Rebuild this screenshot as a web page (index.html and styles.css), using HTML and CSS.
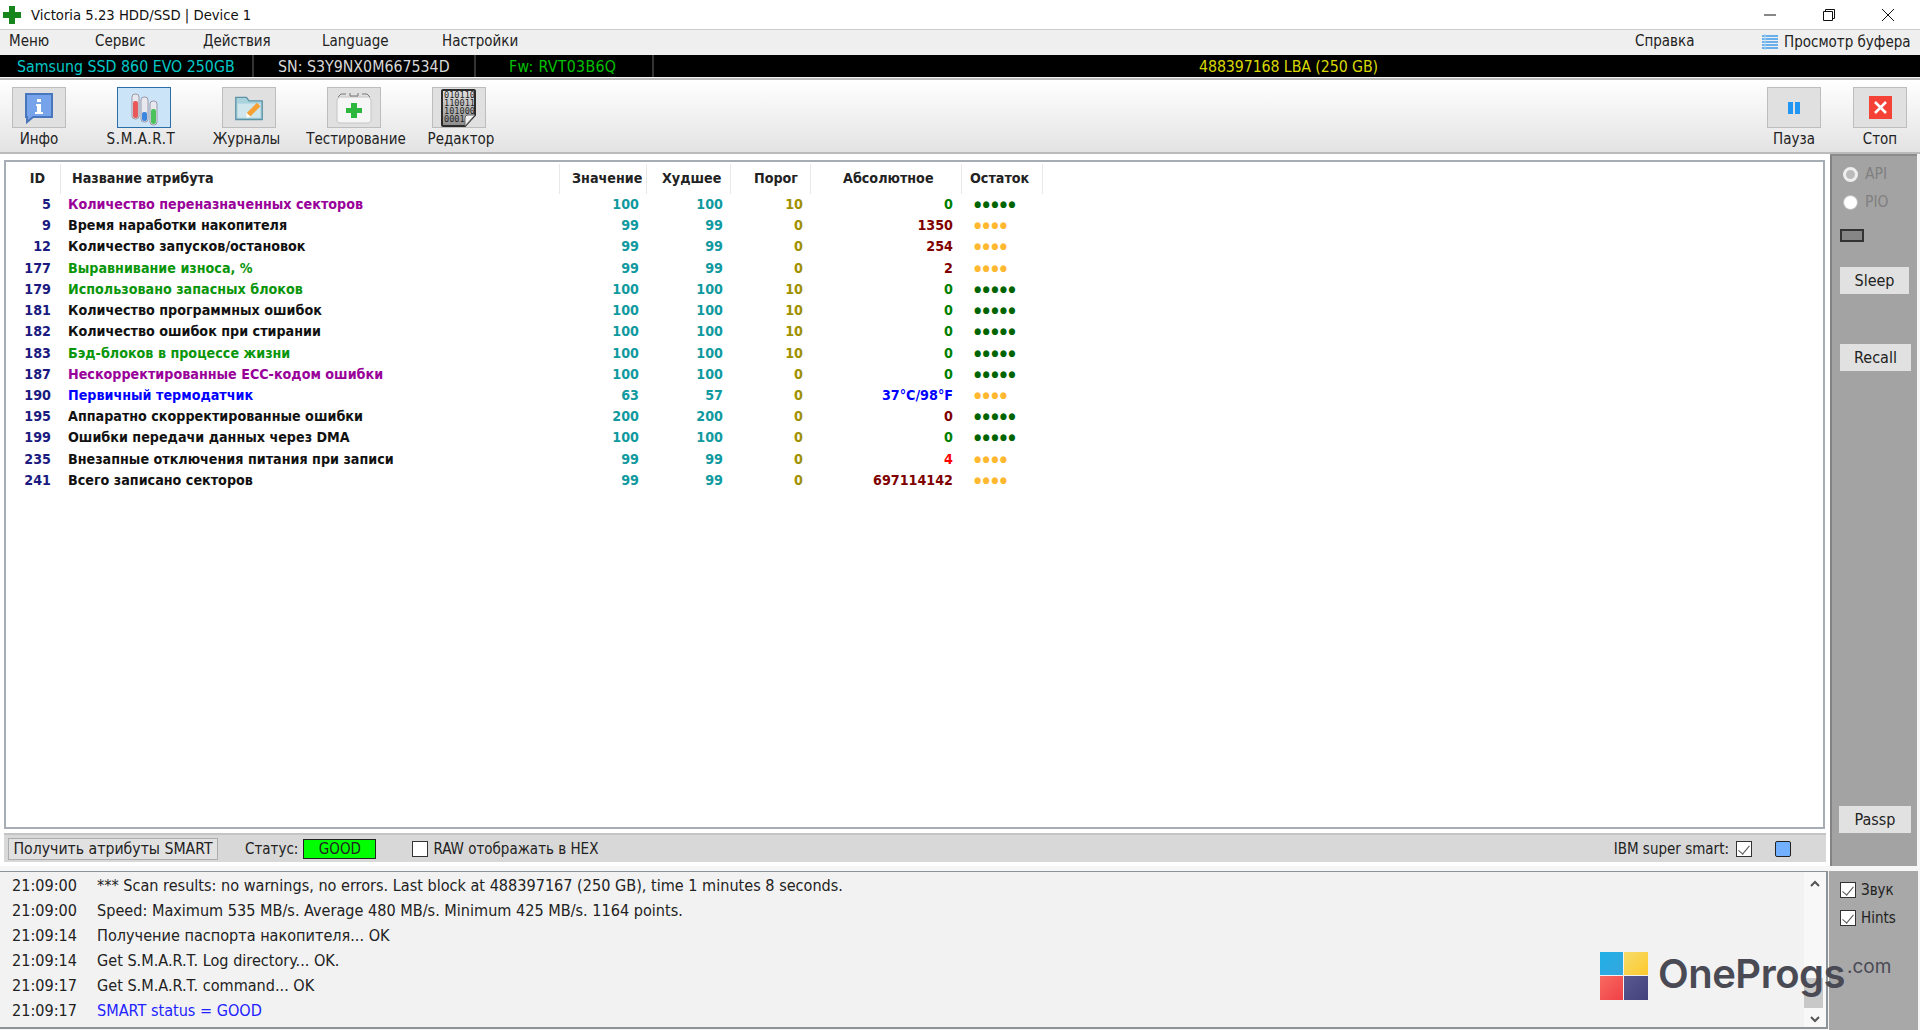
FILE: index.html
```html
<!DOCTYPE html>
<html lang="ru">
<head>
  <meta charset="UTF-8">
  <title>Victoria 5.23 HDD/SSD | Device 1</title>
  <link rel="stylesheet" href="styles.css">
</head>
<body>
  <header class="titlebar">
    <svg class="app-icon" width="20" height="20" viewBox="0 0 20 20"><path fill="#16861c" d="M7 1h6v6h6v6h-6v6H7v-6H1V7h6z"/></svg>
    <span class="title">Victoria 5.23 HDD/SSD | Device 1</span>
    <div class="win-buttons">
      <svg width="14" height="14" viewBox="0 0 14 14"><path d="M1 7h12" stroke="#111" fill="none"/></svg>
      <svg width="14" height="14" viewBox="0 0 14 14"><path d="M1.5 3.5h9v9h-9zM3.5 3.5v-2h9v9h-2" stroke="#111" fill="none"/></svg>
      <svg width="14" height="14" viewBox="0 0 14 14"><path d="M1 1l12 12M13 1L1 13" stroke="#111" fill="none"/></svg>
    </div>
  </header>

  <nav class="menubar">
    <span class="menu-item m1">Меню</span>
    <span class="menu-item m2">Сервис</span>
    <span class="menu-item m3">Действия</span>
    <span class="menu-item m4">Language</span>
    <span class="menu-item m5">Настройки</span>
    <span class="menu-item m6">Справка</span>
    <span class="menu-item m7">
      <svg width="16" height="16" viewBox="0 0 16 16"><path stroke="#3c9bea" stroke-width="1.4" d="M0 2h16M0 5h16M0 8h16M0 11h16M0 14h16"/><path stroke="#a8d4f5" stroke-width="1.2" d="M3 0v16"/></svg>
      Просмотр буфера
    </span>
  </nav>

  <div class="drivebar">
    <span class="drive-cell model">Samsung SSD 860 EVO 250GB</span>
    <span class="drive-cell serial">SN: S3Y9NX0M667534D</span>
    <span class="drive-cell firmware">Fw: RVT03B6Q</span>
    <span class="drive-cell lba">488397168 LBA (250 GB)</span>
  </div>

  <div class="toolbar">
    <div class="tool">
      <div class="tool-btn">
        <svg width="34" height="34" viewBox="0 0 34 34"><path fill="#76a3ea" stroke="#4a76bd" stroke-width="2" d="M4 3h26v23H11l-6 5v-5H4z"/><rect x="15" y="8" width="4" height="3" fill="#fff"/><path fill="#fff" d="M14 13h5v8h2v2h-8v-2h2v-6h-1z"/></svg>
      </div>
      <span class="tool-label">Инфо</span>
    </div>
    <div class="tool">
      <div class="tool-btn active">
        <svg width="34" height="36" viewBox="0 0 34 36">
          <rect x="5" y="4" width="7" height="25" rx="3" fill="#e8e8ee" stroke="#9a9aa8"/><rect x="6" y="11" width="5" height="17" rx="2" fill="#e8575a"/>
          <rect x="14" y="7" width="7" height="25" rx="3" fill="#e8e8ee" stroke="#9a9aa8"/><rect x="15" y="22" width="5" height="9" rx="2" fill="#3a86e0"/>
          <rect x="23" y="11" width="7" height="24" rx="3" fill="#e8e8ee" stroke="#9a9aa8"/><rect x="24" y="19" width="5" height="15" rx="2" fill="#4cc35a"/>
        </svg>
      </div>
      <span class="tool-label label-smart">S.M.A.R.T</span>
    </div>
    <div class="tool">
      <div class="tool-btn">
        <svg width="32" height="30" viewBox="0 0 36 34"><path fill="#a8d2dc" stroke="#5b93a6" stroke-width="1.5" d="M3 5h12l3 4h15v21H3z"/><path fill="#cfe6ec" d="M5 12h26v16H5z"/><path fill="#f5a033" d="M27 11l4 4-11 11-5 1 1-5z"/><path fill="#fff" d="M15 22l5 5-5 1z"/></svg>
      </div>
      <span class="tool-label label-logs">Журналы</span>
    </div>
    <div class="tool">
      <div class="tool-btn">
        <svg width="42" height="36" viewBox="0 0 42 36"><path fill="#f6f6f6" stroke="#c4c4c4" d="M6 7h30l2 3v21l-2 2H6l-2-2V10z"/><path fill="none" stroke="#777" d="M5 7l3-3h5M17 3v3h8V3M29 4h5l3 3"/><path fill="#2db83d" d="M18 13h6v5h5v5h-5v5h-6v-5h-5v-5h5z"/></svg>
      </div>
      <span class="tool-label label-shift">Тестирование</span>
    </div>
    <div class="tool">
      <div class="tool-btn">
        <svg width="40" height="40" viewBox="0 0 40 40">
          <defs><linearGradient id="sheet" x1="0" y1="0" x2="0" y2="1"><stop offset="0" stop-color="#e4e4e4"/><stop offset="1" stop-color="#8c8c8c"/></linearGradient></defs>
          <path fill="url(#sheet)" stroke="#2c2c2c" stroke-width="2" d="M3 3q0-1 1-1h31q1 0 1 1v24l-10 11H4q-1 0-1-1z"/><path fill="#f2f2f2" stroke="#666" d="M36 27l-10 11v-8q0-3 3-3z"/>
          <text class="bits" x="5" y="10">010110</text><text class="bits" x="5" y="18">110011</text><text class="bits" x="5" y="26">101000</text><text class="bits" x="5" y="34">0001</text>
        </svg>
      </div>
      <span class="tool-label label-shift">Редактор</span>
    </div>

    <div class="tool tool-wide tool-right">
      <div class="tool-btn">
        <svg width="14" height="14" viewBox="0 0 14 14"><path fill="#2196f3" d="M1 1h5v12H1zM8 1h5v12H8z"/></svg>
      </div>
      <span class="tool-label">Пауза</span>
    </div>
    <div class="tool tool-wide">
      <div class="tool-btn">
        <svg width="23" height="23" viewBox="0 0 23 23"><rect width="23" height="23" fill="#f44336"/><path d="M6 6l11 11M17 6L6 17" stroke="#fff" stroke-width="2.6"/></svg>
      </div>
      <span class="tool-label">Стоп</span>
    </div>
  </div>

  <div class="workarea">
    <section class="attrs-col">
      <div class="attrs">
        <div class="attr-row attr-head">
          <span class="c-id">ID</span>
          <span class="c-name">Название атрибута</span>
          <span class="c-val">Значение</span>
          <span class="c-worst">Худшее</span>
          <span class="c-thr">Порог</span>
          <span class="c-abs">Абсолютное</span>
          <span class="c-left">Остаток</span>
        </div>
        <div class="attr-row"><span class="c-id">5</span><span class="c-name purple">Количество переназначенных секторов</span><span class="c-val">100</span><span class="c-worst">100</span><span class="c-thr">10</span><span class="c-abs ok">0</span><span class="c-left full">●●●●●</span></div>
        <div class="attr-row"><span class="c-id">9</span><span class="c-name">Время наработки накопителя</span><span class="c-val">99</span><span class="c-worst">99</span><span class="c-thr">0</span><span class="c-abs dark">1350</span><span class="c-left used">●●●●</span></div>
        <div class="attr-row"><span class="c-id">12</span><span class="c-name">Количество запусков/остановок</span><span class="c-val">99</span><span class="c-worst">99</span><span class="c-thr">0</span><span class="c-abs dark">254</span><span class="c-left used">●●●●</span></div>
        <div class="attr-row"><span class="c-id">177</span><span class="c-name green">Выравнивание износа, %</span><span class="c-val">99</span><span class="c-worst">99</span><span class="c-thr">0</span><span class="c-abs dark">2</span><span class="c-left used">●●●●</span></div>
        <div class="attr-row"><span class="c-id">179</span><span class="c-name green">Использовано запасных блоков</span><span class="c-val">100</span><span class="c-worst">100</span><span class="c-thr">10</span><span class="c-abs ok">0</span><span class="c-left full">●●●●●</span></div>
        <div class="attr-row"><span class="c-id">181</span><span class="c-name">Количество программных ошибок</span><span class="c-val">100</span><span class="c-worst">100</span><span class="c-thr">10</span><span class="c-abs ok">0</span><span class="c-left full">●●●●●</span></div>
        <div class="attr-row"><span class="c-id">182</span><span class="c-name">Количество ошибок при стирании</span><span class="c-val">100</span><span class="c-worst">100</span><span class="c-thr">10</span><span class="c-abs ok">0</span><span class="c-left full">●●●●●</span></div>
        <div class="attr-row"><span class="c-id">183</span><span class="c-name green">Бэд-блоков в процессе жизни</span><span class="c-val">100</span><span class="c-worst">100</span><span class="c-thr">10</span><span class="c-abs ok">0</span><span class="c-left full">●●●●●</span></div>
        <div class="attr-row"><span class="c-id">187</span><span class="c-name purple">Нескорректированные ЕСС-кодом ошибки</span><span class="c-val">100</span><span class="c-worst">100</span><span class="c-thr">0</span><span class="c-abs ok">0</span><span class="c-left full">●●●●●</span></div>
        <div class="attr-row"><span class="c-id">190</span><span class="c-name blue">Первичный термодатчик</span><span class="c-val">63</span><span class="c-worst">57</span><span class="c-thr">0</span><span class="c-abs blue">37°C/98°F</span><span class="c-left used">●●●●</span></div>
        <div class="attr-row"><span class="c-id">195</span><span class="c-name">Аппаратно скорректированные ошибки</span><span class="c-val">200</span><span class="c-worst">200</span><span class="c-thr">0</span><span class="c-abs dark">0</span><span class="c-left full">●●●●●</span></div>
        <div class="attr-row"><span class="c-id">199</span><span class="c-name">Ошибки передачи данных через DMA</span><span class="c-val">100</span><span class="c-worst">100</span><span class="c-thr">0</span><span class="c-abs ok">0</span><span class="c-left full">●●●●●</span></div>
        <div class="attr-row"><span class="c-id">235</span><span class="c-name">Внезапные отключения питания при записи</span><span class="c-val">99</span><span class="c-worst">99</span><span class="c-thr">0</span><span class="c-abs red">4</span><span class="c-left used">●●●●</span></div>
        <div class="attr-row"><span class="c-id">241</span><span class="c-name">Всего записано секторов</span><span class="c-val">99</span><span class="c-worst">99</span><span class="c-thr">0</span><span class="c-abs dark">697114142</span><span class="c-left used">●●●●</span></div>
      </div>

      <div class="statusbar">
        <button class="get-btn">Получить атрибуты SMART</button>
        <span class="status-label">Статус:</span>
        <span class="status-good">GOOD</span>
        <label class="check hex-check"><span class="box"></span>RAW отображать в HEX</label>
        <label class="check ibm-check">IBM super smart:<span class="box checked"></span></label>
        <span class="blue-led"></span>
      </div>
    </section>

    <aside class="side">
      <label class="radio radio-api"><span class="dot selected"></span>API</label>
      <label class="radio radio-pio"><span class="dot"></span>PIO</label>
      <span class="side-rect"></span>
      <button class="side-btn sleep">Sleep</button>
      <button class="side-btn recall">Recall</button>
      <button class="side-btn passp">Passp</button>
    </aside>

    <section class="log">
      <div class="log-line"><span class="time">21:09:00</span>*** Scan results: no warnings, no errors. Last block at 488397167 (250 GB), time 1 minutes 8 seconds.</div>
      <div class="log-line"><span class="time">21:09:00</span>Speed: Maximum 535 MB/s. Average 480 MB/s. Minimum 425 MB/s. 1164 points.</div>
      <div class="log-line"><span class="time">21:09:14</span>Получение паспорта накопителя... OK</div>
      <div class="log-line"><span class="time">21:09:14</span>Get S.M.A.R.T. Log directory... OK.</div>
      <div class="log-line"><span class="time">21:09:17</span>Get S.M.A.R.T. command... OK</div>
      <div class="log-line"><span class="time">21:09:17</span><span class="log-blue">SMART status = GOOD</span></div>
      <div class="scrollbar">
        <svg width="12" height="8" viewBox="0 0 12 8"><path d="M2 6l4-4 4 4" fill="none" stroke="#555" stroke-width="2"/></svg>
        <span class="thumb"></span>
        <svg width="12" height="8" viewBox="0 0 12 8"><path d="M2 2l4 4 4-4" fill="none" stroke="#555" stroke-width="2"/></svg>
      </div>
      <div class="watermark">
        <svg width="48" height="48" viewBox="0 0 48 48">
          <defs>
            <linearGradient id="wm-a" x1="0" y1="0" x2="1" y2="1"><stop offset="0" stop-color="#1fb0e8"/><stop offset="1" stop-color="#35a6dc"/></linearGradient>
            <linearGradient id="wm-b" x1="0" y1="0" x2="1" y2="1"><stop offset="0" stop-color="#f6dc6a"/><stop offset="1" stop-color="#fdc92e"/></linearGradient>
            <linearGradient id="wm-c" x1="0" y1="0" x2="1" y2="1"><stop offset="0" stop-color="#f96a62"/><stop offset="1" stop-color="#ef4046"/></linearGradient>
            <linearGradient id="wm-d" x1="0" y1="0" x2="1" y2="1"><stop offset="0" stop-color="#5a5890"/><stop offset="1" stop-color="#44427a"/></linearGradient>
          </defs>
          <rect width="23" height="23" fill="url(#wm-a)"/><rect x="24" width="24" height="23" fill="url(#wm-b)"/><rect y="24" width="23" height="24" fill="url(#wm-c)"/><rect x="24" y="24" width="24" height="24" fill="url(#wm-d)"/>
        </svg>
        <span class="wm-name">OneProgs</span><span class="wm-com">.com</span>
      </div>
    </section>

    <aside class="side-low">
      <label class="check side-check"><span class="box checked"></span>Звук</label>
      <label class="check side-check"><span class="box checked"></span>Hints</label>
    </aside>
  </div>
</body>
</html>
```

FILE: styles.css
```css
* {
  box-sizing: border-box;
}

html, body {
  margin: 0;
  height: 100%;
}

body {
  width: 1920px;
  height: 1030px;
  overflow: hidden;
  display: flex;
  flex-direction: column;
  background: #f4f4f4;
  color: #222;
  font-family: "DejaVu Sans", sans-serif;
  font-stretch: condensed;
  font-size: 15px;
}

button {
  font: inherit;
  font-stretch: condensed;
  color: inherit;
}

/* title */
.titlebar {
  height: 29px;
  display: flex;
  align-items: center;
  background: #fff;
  padding-left: 2px;
}

.app-icon {
  margin-right: 9px;
}

.title {
  font-size: 14.7px;
  color: #111;
}

.win-buttons {
  margin-left: auto;
  display: flex;
  gap: 45px;
  padding-right: 25px;
}

/* menu */
.menubar {
  height: 26px;
  position: relative;
  background: #efefef;
  border-top: 1px solid #ccc;
}

.menu-item {
  position: absolute;
  top: 2px;
  display: flex;
  align-items: center;
  gap: 6px;
  white-space: nowrap;
}

.m1 { left: 9px; }
.m2 { left: 95px; }
.m3 { left: 203px; }
.m4 { left: 322px; }
.m5 { left: 442px; }
.m6 { left: 1635px; }
.m7 { left: 1762px; top: 3px; }

.drivebar {
  height: 22px;
  display: flex;
  align-items: center;
  background: #000;
  font-size: 15.8px;
}

.drive-cell {
  height: 100%;
  display: flex;
  align-items: center;
  border-right: 2px solid #333;
  white-space: nowrap;
}

.model { width: 254px; padding-left: 17px; color: #00c8c8; }
.serial { width: 222px; padding-left: 24px; color: #d8d8d8; }
.firmware { width: 178px; padding-left: 33px; color: #00c000; letter-spacing: 0.3px; }
.lba { flex: 1; border: 0; padding-left: 545px; color: #d8d800; letter-spacing: -0.1px; }

/* toolbar */
.toolbar {
  height: 76px;
  margin-top: 1px;
  padding: 7px 13px 0 12px;
  display: flex;
  gap: 51px;
  background: linear-gradient(#fff, #e3e3e3);
  border-top: 2px solid #bbb;
  border-bottom: 2px solid #bbb;
}

.tool {
  width: 54px;
  display: flex;
  flex-direction: column;
  align-items: center;
}

.tool-right {
  margin-left: auto;
}

.tool-wide + .tool-wide {
  margin-left: -19px;
}

.tool-btn {
  width: 54px;
  height: 41px;
  flex: none;
  display: flex;
  align-items: center;
  justify-content: center;
  background: #e0e0e0;
  border: 1px solid #bdbdbd;
}

.tool-btn.active {
  background: #cce4f7;
  border-color: #2a6fa8;
}

.tool-label {
  margin-top: 2px;
  white-space: nowrap;
}

.label-smart {
  margin-right: 6px;
  letter-spacing: 0.6px;
}

.label-logs {
  margin-right: 5px;
}

.label-shift {
  margin-left: 4px;
}

.bits {
  font: 8.6px "DejaVu Sans Mono", monospace;
  fill: #262626;
}

/* main area */
.workarea {
  flex: 1;
  display: grid;
  grid-template-columns: 1830px 88px;
  grid-template-rows: 712px 1fr;
  background: #f6f6f6;
}

.attrs-col {
  padding: 6px 5px 3px 4px;
  display: flex;
  flex-direction: column;
  background: #fff;
}

.attrs {
  height: 669px;
  background: #fff;
  border: 2px solid #a6adb4;
  font-weight: 700;
  font-size: 14.2px;
  padding-top: 2px;
}

.attr-row {
  height: 21.23px;
  line-height: 21px;
  display: grid;
  grid-template-columns: 55px 499px 87px 84px 80px 151px 81px;
  white-space: nowrap;
}

.attr-head {
  height: 30px;
  line-height: 29px;
  color: #222;
}

.attr-head span {
  border-right: 1px solid #e8e8e8;
  text-align: center;
}

.attr-head .c-id {
  padding-left: 9px;
}

.attr-head .c-name {
  padding-left: 11px;
  text-align: left;
}

.attr-head .c-val {
  text-align: left;
  padding-left: 12px;
}

.attr-head .c-worst {
  text-align: left;
  padding-left: 15px;
}

.attr-head .c-thr {
  text-align: left;
  padding-left: 23px;
}

.attr-head .c-abs {
  text-align: left;
  padding-left: 32px;
  color: #222;
}

.attr-head .c-left {
  text-align: left;
  padding-left: 8px;
  color: #222;
}

.attr-row:not(.attr-head) .c-id {
  padding-right: 10px;
  text-align: right;
  color: #1a1a80;
}

.attr-row:not(.attr-head) .c-name {
  padding-left: 7px;
  color: #111;
}

.attr-row:not(.attr-head) .c-val,
.attr-row:not(.attr-head) .c-worst {
  padding-right: 8px;
  text-align: right;
  color: #109aa0;
}

.attr-row:not(.attr-head) .c-thr {
  padding-right: 8px;
  text-align: right;
  color: #a09000;
}

.attr-row:not(.attr-head) .c-abs {
  padding-right: 9px;
  text-align: right;
}

.attr-row:not(.attr-head) .c-left {
  padding-left: 12px;
  font-size: 9px;
  letter-spacing: 1.5px;
}

.attr-row:not(.attr-head) .purple { color: #990099; }
.attr-row:not(.attr-head) .green { color: #0a960a; }
.attr-row:not(.attr-head) .blue { color: #0000ff; }
.attr-row:not(.attr-head) .ok { color: #008000; }
.attr-row:not(.attr-head) .dark { color: #800000; }
.attr-row:not(.attr-head) .red { color: #ff0000; }
.full { color: #006400; }
.used { color: #ffb830; }

.statusbar {
  height: 29px;
  margin-top: 4px;
  margin-right: -1px;
  position: relative;
  display: flex;
  align-items: center;
  background: #d8d8d8;
  border-top: 2px solid #c4c4c4;
}

.get-btn {
  width: 210px;
  height: 22px;
  margin-left: 4px;
  padding: 0;
  background: #e1e1e1;
  border: 1px solid #adadad;
  font-size: 15.7px;
}

.status-label {
  margin-left: 27px;
}

.status-good {
  width: 73px;
  height: 20px;
  margin-left: 5px;
  line-height: 18px;
  text-align: center;
  background: #00ff00;
  border: 1px solid #222;
}

.check {
  display: flex;
  align-items: center;
  gap: 5px;
  white-space: nowrap;
}

.box {
  width: 16px;
  height: 16px;
  flex: none;
  background: #fff;
  border: 1px solid #333;
}

.box.checked {
  position: relative;
}

.box.checked::after {
  content: "";
  position: absolute;
  left: 4px;
  top: 1px;
  width: 5px;
  height: 10px;
  border: solid #555;
  border-width: 0 1.5px 1.5px 0;
  transform: rotate(40deg);
}

.hex-check {
  margin-left: 36px;
}

.ibm-check {
  margin-left: auto;
  gap: 7px;
}

.blue-led {
  width: 16px;
  height: 16px;
  margin: 0 35px 0 23px;
  background: #70b0ff;
  border: 1px solid #222;
  border-radius: 2px;
}

/* side panels */
.side {
  width: 87px;
  position: relative;
  background: #a3a3a3;
  border-left: 2px solid #838383;
  border-top: 2px solid #8c8c8c;
}

.radio {
  position: absolute;
  left: 11px;
  display: flex;
  align-items: center;
  gap: 7px;
  color: #808080;
  font-size: 15.5px;
}

.radio-api { top: 9px; }
.radio-pio { top: 37px; }

.dot {
  width: 15px;
  height: 15px;
  border-radius: 50%;
  background: #fff;
  border: 1px solid #bbb;
}

.dot.selected {
  background: #bbb;
  border: 3px solid #eee;
}

.side-rect {
  position: absolute;
  left: 8px;
  top: 73px;
  width: 24px;
  height: 13px;
  background: #868686;
  border: 2px solid #333;
}

.side-btn {
  position: absolute;
  left: 8px;
  height: 27px;
  padding: 0;
  background: #e1e1e1;
  border: 0;
  font-size: 16px;
}

.sleep { top: 111px; width: 69px; }
.recall { top: 188px; width: 71px; }
.passp { top: 650px; width: 72px; left: 7px; }

.log {
  height: 158px;
  width: 1828px;
  margin-top: 5px;
  padding: 1px 0 0 12px;
  position: relative;
  background: #f2f2f2;
  border: 1px solid #8d9499;
  border-width: 1px 2px 2px 0;
  font-size: 16.1px;
}

.log-line {
  height: 25.1px;
  line-height: 25px;
  white-space: nowrap;
}

.time {
  display: inline-block;
  width: 85px;
}

.log-blue {
  color: #2222ff;
}

.scrollbar {
  position: absolute;
  top: 0;
  bottom: 0;
  right: 0;
  width: 22px;
  padding: 8px 0 4px;
  display: flex;
  flex-direction: column;
  align-items: center;
  justify-content: space-between;
  background: #f8f8f8;
}

.thumb {
  position: absolute;
  left: 0;
  right: 3px;
  top: 106px;
  height: 30px;
  background: #c8c8c8;
}

.watermark {
  position: absolute;
  left: 1600px;
  top: 80px;
  display: flex;
  align-items: flex-start;
  font-family: Inter, sans-serif;
  font-stretch: normal;
  color: #4a4a55;
}

.wm-name {
  margin: -2px 0 0 10px;
  font-size: 40px;
  font-weight: 600;
  line-height: 48px;
  letter-spacing: -0.5px;
}

.wm-com {
  margin: 2px 0 0 2px;
  font-size: 19px;
  line-height: 26px;
}

.side-low {
  margin-top: 5px;
  width: 89px;
  margin-left: -1px;
  padding: 10px 0 0 11px;
  display: flex;
  flex-direction: column;
  gap: 10px;
  background: #a8a8a8;
}
```
